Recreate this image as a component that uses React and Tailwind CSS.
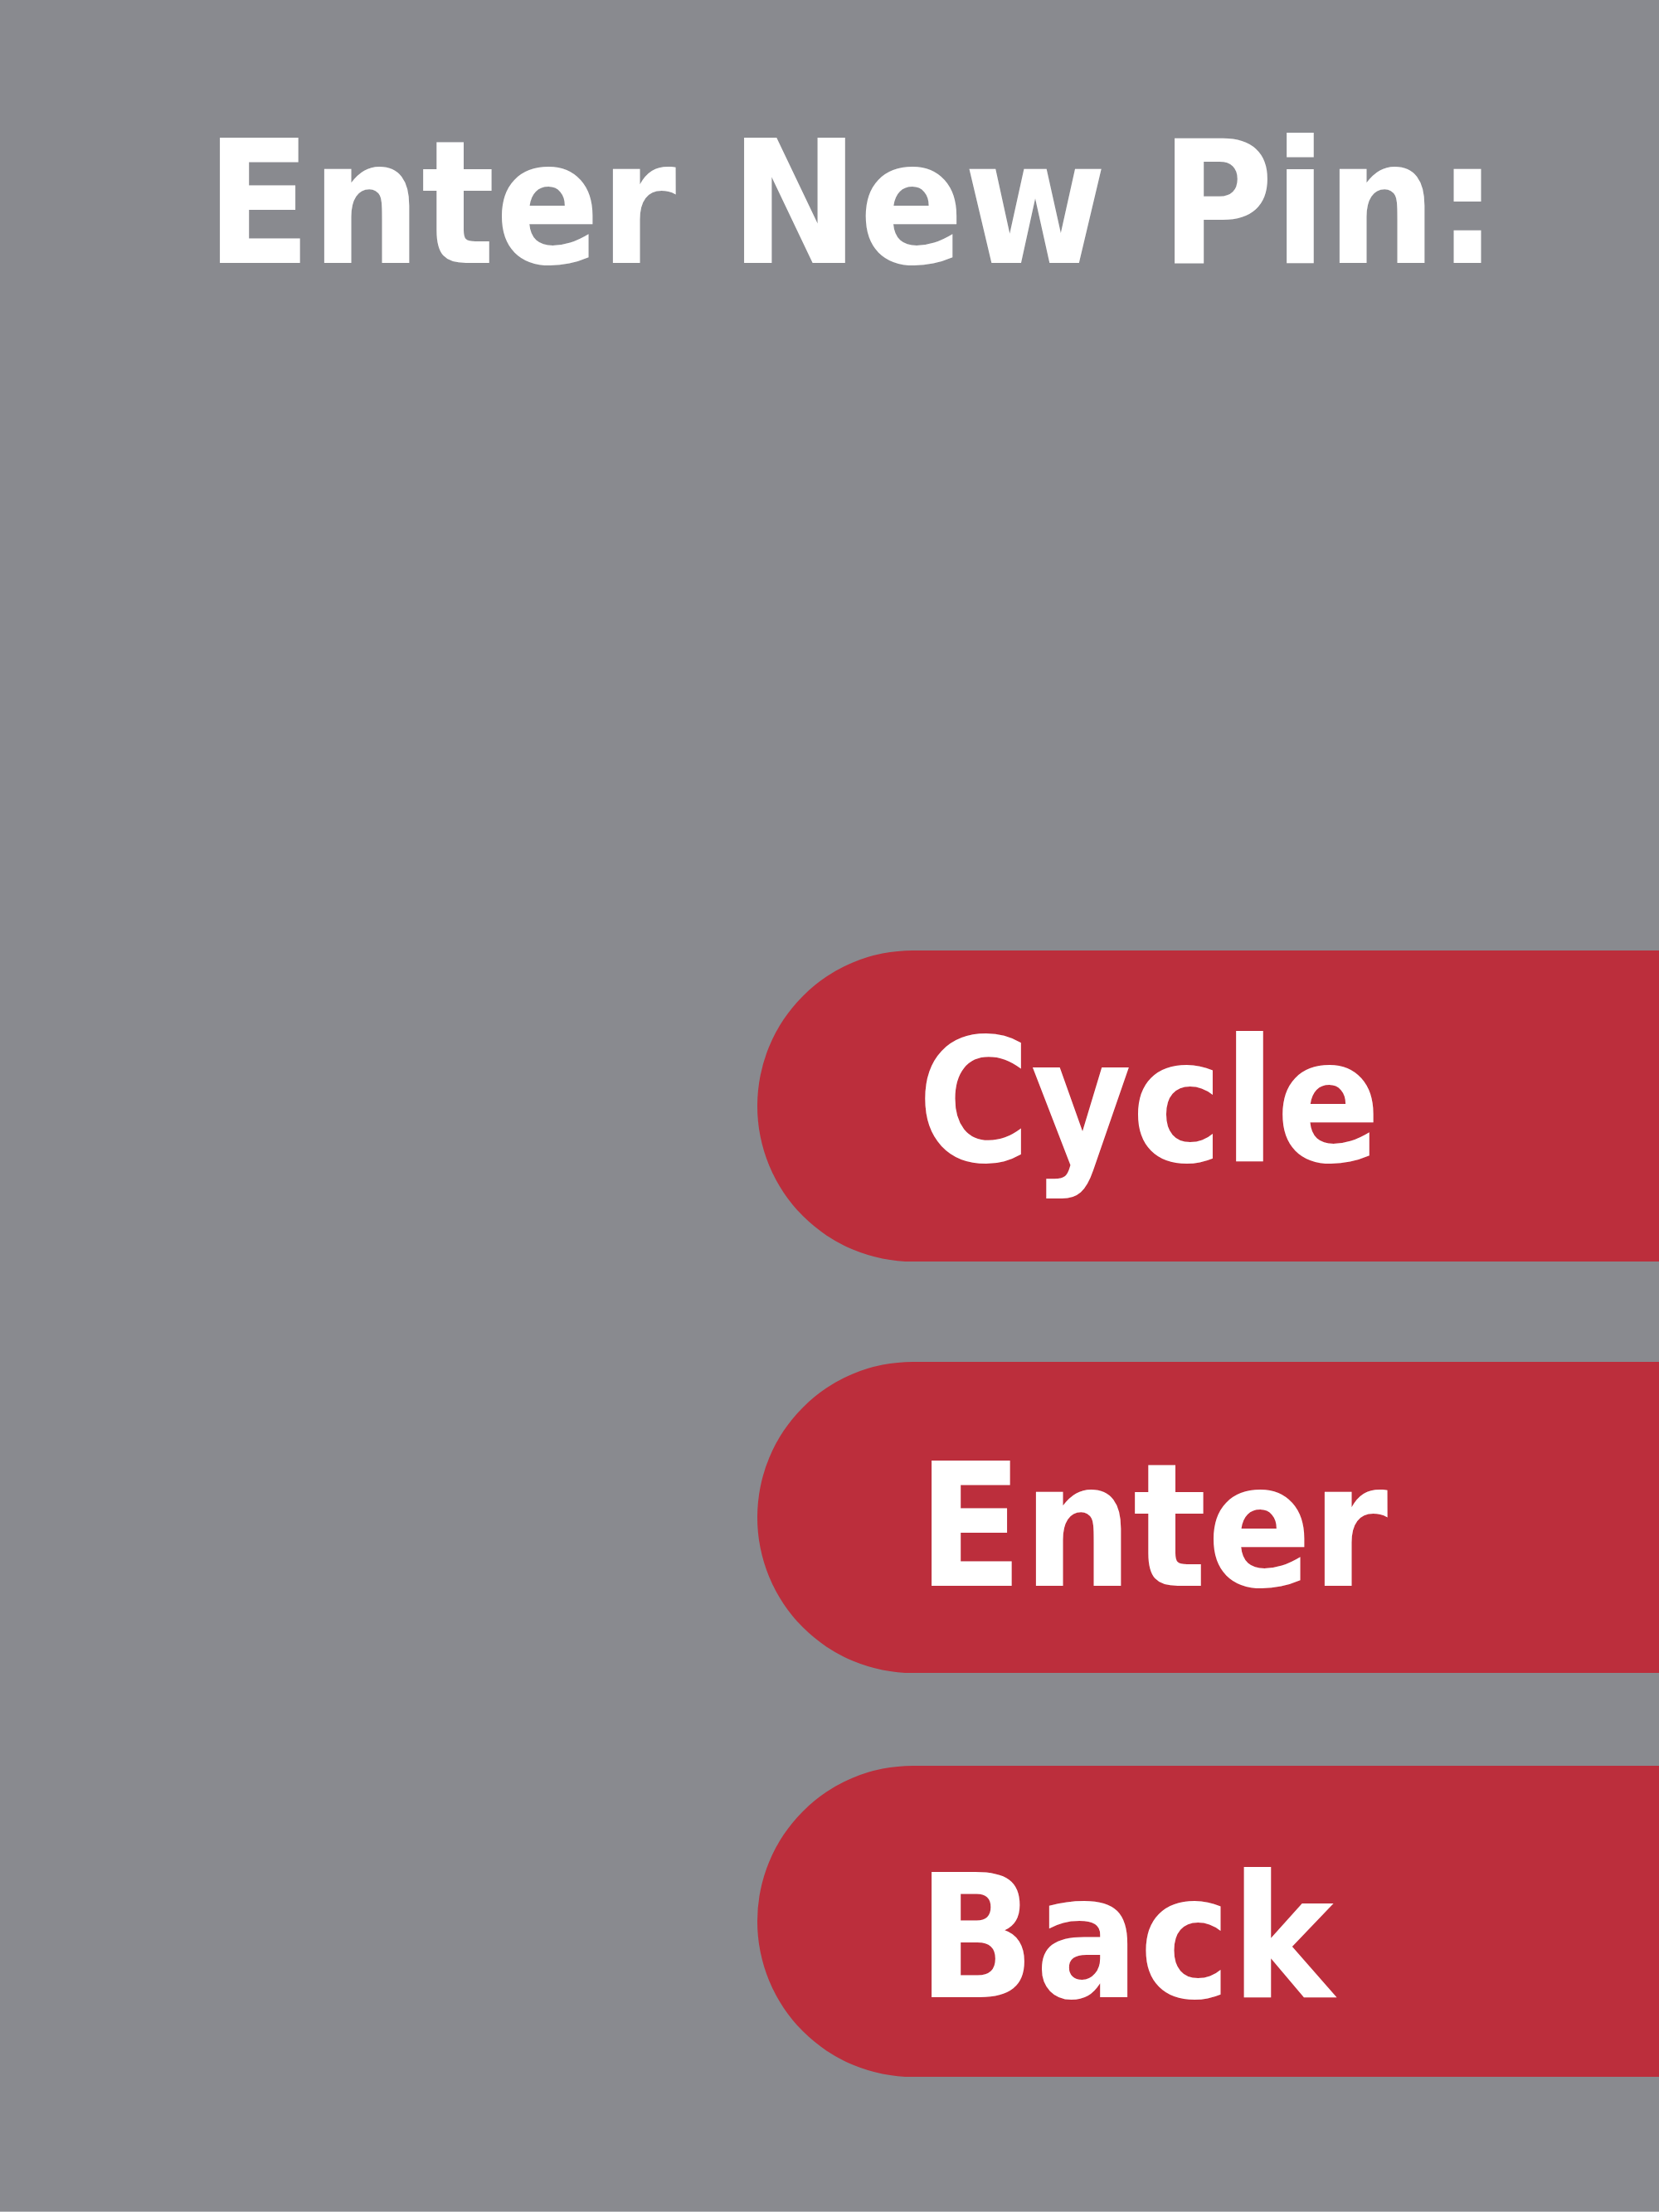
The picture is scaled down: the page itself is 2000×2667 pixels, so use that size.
const buttons = [
  { label: 'Cycle', wrap: 'mt-[797px]', text: 'pt-[79px]' },
  { label: 'Enter', wrap: 'mt-[121px]', text: 'pt-[95px]' },
  { label: 'Back', wrap: 'mt-[112px]', text: 'pt-[104px]' },
]

export default function App() {
  return (
    <div
      className="w-[2000px] h-[2667px] bg-[#898a8f] flex flex-col border-b border-[#b4b5b8] overflow-hidden"
      style={{ fontFamily: '"DejaVu Sans Condensed", "DejaVu Sans", sans-serif' }}
    >
      {/* Title */}
      <h1 className="pt-[142px] pl-[248px] text-[207px] leading-none font-bold text-white whitespace-nowrap">
        Enter New Pin:
      </h1>

      {/* Buttons */}
      {buttons.map(b => (
        <button
          key={b.label}
          className={`${b.wrap} ml-auto w-[1087px] h-[375px] shrink-0 rounded-l-full bg-[#bc2e3c] flex items-start pl-[193px] ${b.text}`}
        >
          <span className="text-[207px] leading-none font-bold text-white whitespace-nowrap">
            {b.label}
          </span>
        </button>
      ))}
    </div>
  )
}
